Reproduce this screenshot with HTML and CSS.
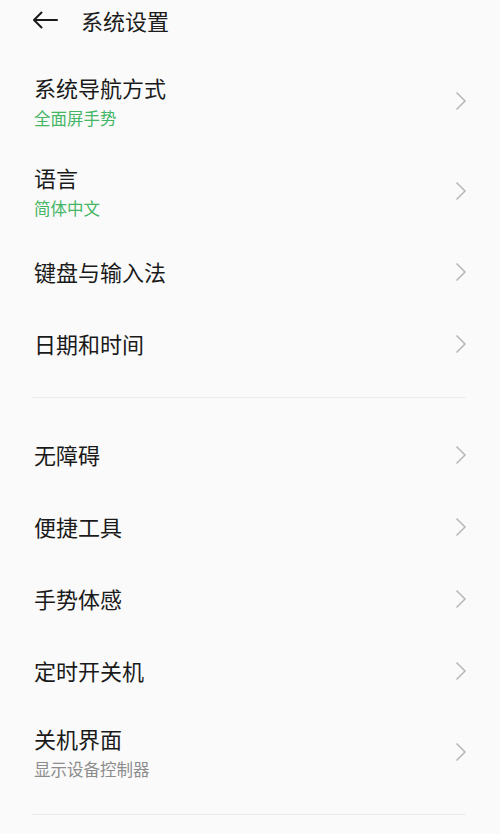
FILE: index.html
```html
<!DOCTYPE html>
<html>
<head>
	<meta charset="utf-8">
	<title>系统设置</title>
	<link rel="stylesheet" href="styles.css">
</head>
<body>
	<div class="header">
		<svg class="back" width="26" height="18" viewBox="0 0 26 18">
			<path d="M25 9 H2 M9.5 1.5 L2 9 L9.5 16.5" fill="none" stroke="#1a1a1a" stroke-width="2" stroke-linecap="round" stroke-linejoin="round"/>
		</svg>
		<h1>系统设置</h1>
	</div>

	<div class="section">
		<div class="item two">
			<div class="text">
				<div class="title">系统导航方式</div>
				<div class="sub green">全面屏手势</div>
			</div>
			<svg class="chev" width="12" height="20" viewBox="0 0 12 20"><path d="M1.5 1.5 L10 10 L1.5 18.5" fill="none" stroke="#b9b9b9" stroke-width="1.6"/></svg>
		</div>
		<div class="item two">
			<div class="text">
				<div class="title">语言</div>
				<div class="sub green">简体中文</div>
			</div>
			<svg class="chev" width="12" height="20" viewBox="0 0 12 20"><path d="M1.5 1.5 L10 10 L1.5 18.5" fill="none" stroke="#b9b9b9" stroke-width="1.6"/></svg>
		</div>
		<div class="item">
			<div class="text">
				<div class="title">键盘与输入法</div>
			</div>
			<svg class="chev" width="12" height="20" viewBox="0 0 12 20"><path d="M1.5 1.5 L10 10 L1.5 18.5" fill="none" stroke="#b9b9b9" stroke-width="1.6"/></svg>
		</div>
		<div class="item">
			<div class="text">
				<div class="title">日期和时间</div>
			</div>
			<svg class="chev" width="12" height="20" viewBox="0 0 12 20"><path d="M1.5 1.5 L10 10 L1.5 18.5" fill="none" stroke="#b9b9b9" stroke-width="1.6"/></svg>
		</div>
	</div>

	<div class="divider"></div>

	<div class="section second">
		<div class="item">
			<div class="text">
				<div class="title">无障碍</div>
			</div>
			<svg class="chev" width="12" height="20" viewBox="0 0 12 20"><path d="M1.5 1.5 L10 10 L1.5 18.5" fill="none" stroke="#b9b9b9" stroke-width="1.6"/></svg>
		</div>
		<div class="item">
			<div class="text">
				<div class="title">便捷工具</div>
			</div>
			<svg class="chev" width="12" height="20" viewBox="0 0 12 20"><path d="M1.5 1.5 L10 10 L1.5 18.5" fill="none" stroke="#b9b9b9" stroke-width="1.6"/></svg>
		</div>
		<div class="item">
			<div class="text">
				<div class="title">手势体感</div>
			</div>
			<svg class="chev" width="12" height="20" viewBox="0 0 12 20"><path d="M1.5 1.5 L10 10 L1.5 18.5" fill="none" stroke="#b9b9b9" stroke-width="1.6"/></svg>
		</div>
		<div class="item">
			<div class="text">
				<div class="title">定时开关机</div>
			</div>
			<svg class="chev" width="12" height="20" viewBox="0 0 12 20"><path d="M1.5 1.5 L10 10 L1.5 18.5" fill="none" stroke="#b9b9b9" stroke-width="1.6"/></svg>
		</div>
		<div class="item two">
			<div class="text">
				<div class="title">关机界面</div>
				<div class="sub gray">显示设备控制器</div>
			</div>
			<svg class="chev" width="12" height="20" viewBox="0 0 12 20"><path d="M1.5 1.5 L10 10 L1.5 18.5" fill="none" stroke="#b9b9b9" stroke-width="1.6"/></svg>
		</div>
	</div>

	<div class="divider"></div>
</body>
</html>
```

FILE: styles.css
```css
body{
	background: #fafafa;
	margin: 0;
	font-family: "Noto Sans CJK SC", "Noto Sans", sans-serif;
	color: #1a1a1a;
}
.header{
	height: 40px;
	display: flex;
	align-items: center;
	padding-left: 32px;
}
.header .back{
	display: block;
	margin-right: 23px;
}
.header h1{
	margin: 0;
	font-size: 22px;
	font-weight: normal;
	line-height: 40px;
	color: #1c1c1c;
}
.section{
	margin-top: 16px;
}
.section.second{
	margin-top: 21px;
}
.item{
	height: 72px;
	box-sizing: border-box;
	display: flex;
	align-items: center;
	justify-content: space-between;
	padding: 0 33px 3px 34px;
}
.item.two{
	height: 90px;
	padding-bottom: 1px;
}
.item .chev{
	margin-top: 3px;
}
.item.two .chev{
	margin-top: 1px;
}
.title{
	font-size: 22px;
	line-height: 30px;
}
.sub{
	font-size: 16.5px;
	line-height: 24px;
	margin-top: 4px;
}
.green{
	color: #45b665;
}
.gray{
	color: #8c8c8c;
}
.chev{
	display: block;
}
.divider{
	height: 1px;
	background: #ececec;
	margin: 17px 34px 0 32px;
}
```
